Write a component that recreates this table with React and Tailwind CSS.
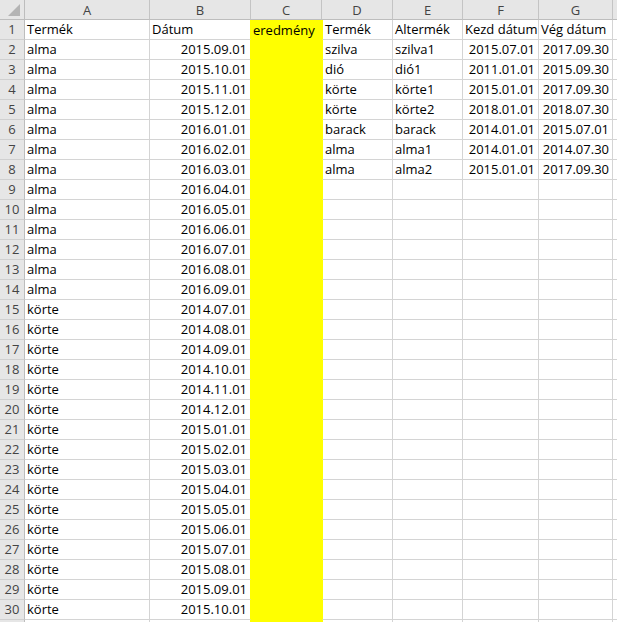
import React from "react";

const almaDates = [
  "2015.09.01","2015.10.01","2015.11.01","2015.12.01","2016.01.01","2016.02.01","2016.03.01",
  "2016.04.01","2016.05.01","2016.06.01","2016.07.01","2016.08.01","2016.09.01",
];
const korteDates = [
  "2014.07.01","2014.08.01","2014.09.01","2014.10.01","2014.11.01","2014.12.01",
  "2015.01.01","2015.02.01","2015.03.01","2015.04.01","2015.05.01","2015.06.01",
  "2015.07.01","2015.08.01","2015.09.01","2015.10.01",
];
const right = [
  ["Termék","Altermék","Kezd dátum","Vég dátum"],
  ["szilva","szilva1","2015.07.01","2017.09.30"],
  ["dió","dió1","2011.01.01","2015.09.30"],
  ["körte","körte1","2015.01.01","2017.09.30"],
  ["körte","körte2","2018.01.01","2018.07.30"],
  ["barack","barack","2014.01.01","2015.07.01"],
  ["alma","alma1","2014.01.01","2014.07.30"],
  ["alma","alma2","2015.01.01","2017.09.30"],
];

const rows = [["Termék","Dátum"]];
almaDates.forEach((d) => rows.push(["alma", d]));
korteDates.forEach((d) => rows.push(["körte", d]));
rows.push(["", ""]);

const widths = ["w-[125px]","w-[101px]","w-[71px]","w-[71px]","w-[70px]","w-[76px]","w-[74px]"];

function Cell({ w, children, align = "left", cls = "" }) {
  return (
    <div
      className={`${w} h-[20px] shrink-0 border-r border-b border-[#d4d4d4] flex items-end overflow-visible whitespace-nowrap pb-[1px] leading-[17px] ${
        align === "right" ? "justify-end pr-[3px]" : "justify-start pl-[2px]"
      } ${cls}`}
    >
      {children}
    </div>
  );
}

export default function App() {
  return (
    <div
      className="w-[617px] h-[622px] overflow-hidden bg-white text-[13px] text-black"
      style={{ fontFamily: '"Open Sans", "Liberation Sans", sans-serif' }}
    >
      {/* column header */}
      <div className="flex h-[20px] bg-[#e6e6e6] text-[#444]">
        <div className="w-[25px] h-[20px] shrink-0 border-r border-b border-[#bdbdbd] relative">
          <svg className="absolute left-[7px] top-[3px]" width="14" height="14" viewBox="0 0 14 14">
            <polygon points="1,13 13,1 13,13" fill="#b4b4b4" />
          </svg>
        </div>
        {["A","B","C","D","E","F","G",""].map((l, i) => (
          <div
            key={i}
            className={`${widths[i] || "w-[40px]"} h-[20px] shrink-0 border-r border-b border-[#c4c4c4] border-b-[#bdbdbd] flex items-center justify-center leading-[18px]`}
          >
            {l}
          </div>
        ))}
      </div>
      {rows.map((r, i) => {
        const rr = right[i] || ["","","",""];
        return (
          <div key={i} className="flex h-[20px]">
            <div className="w-[25px] h-[20px] shrink-0 bg-[#e6e6e6] border-r border-b border-[#bdbdbd] border-b-[#d0d0d0] text-[#444] flex items-end justify-center pb-[1px] leading-[17px]">
              {i < 30 ? i + 1 : ""}
            </div>
            <Cell w={widths[0]}>{r[0]}</Cell>
            <Cell w={widths[1]} align={i === 0 ? "left" : "right"} cls="border-r-[#ffff00]">
              {r[1]}
            </Cell>
            <div className="w-[71px] h-[20px] shrink-0 bg-[#ffff00] flex items-end pl-[2px] pb-[1px] leading-[17px] whitespace-nowrap">
              {i === 0 ? "eredmény" : ""}
            </div>
            <Cell w={widths[3]} cls="border-l border-l-[#ffff00]">{rr[0]}</Cell>
            <Cell w={widths[4]}>{rr[1]}</Cell>
            <Cell w={widths[5]} align={i === 0 ? "left" : "right"}>{rr[2]}</Cell>
            <Cell w={widths[6]} align={i === 0 ? "left" : "right"}>{rr[3]}</Cell>
            <Cell w="w-[40px]"></Cell>
          </div>
        );
      })}
    </div>
  );
}
